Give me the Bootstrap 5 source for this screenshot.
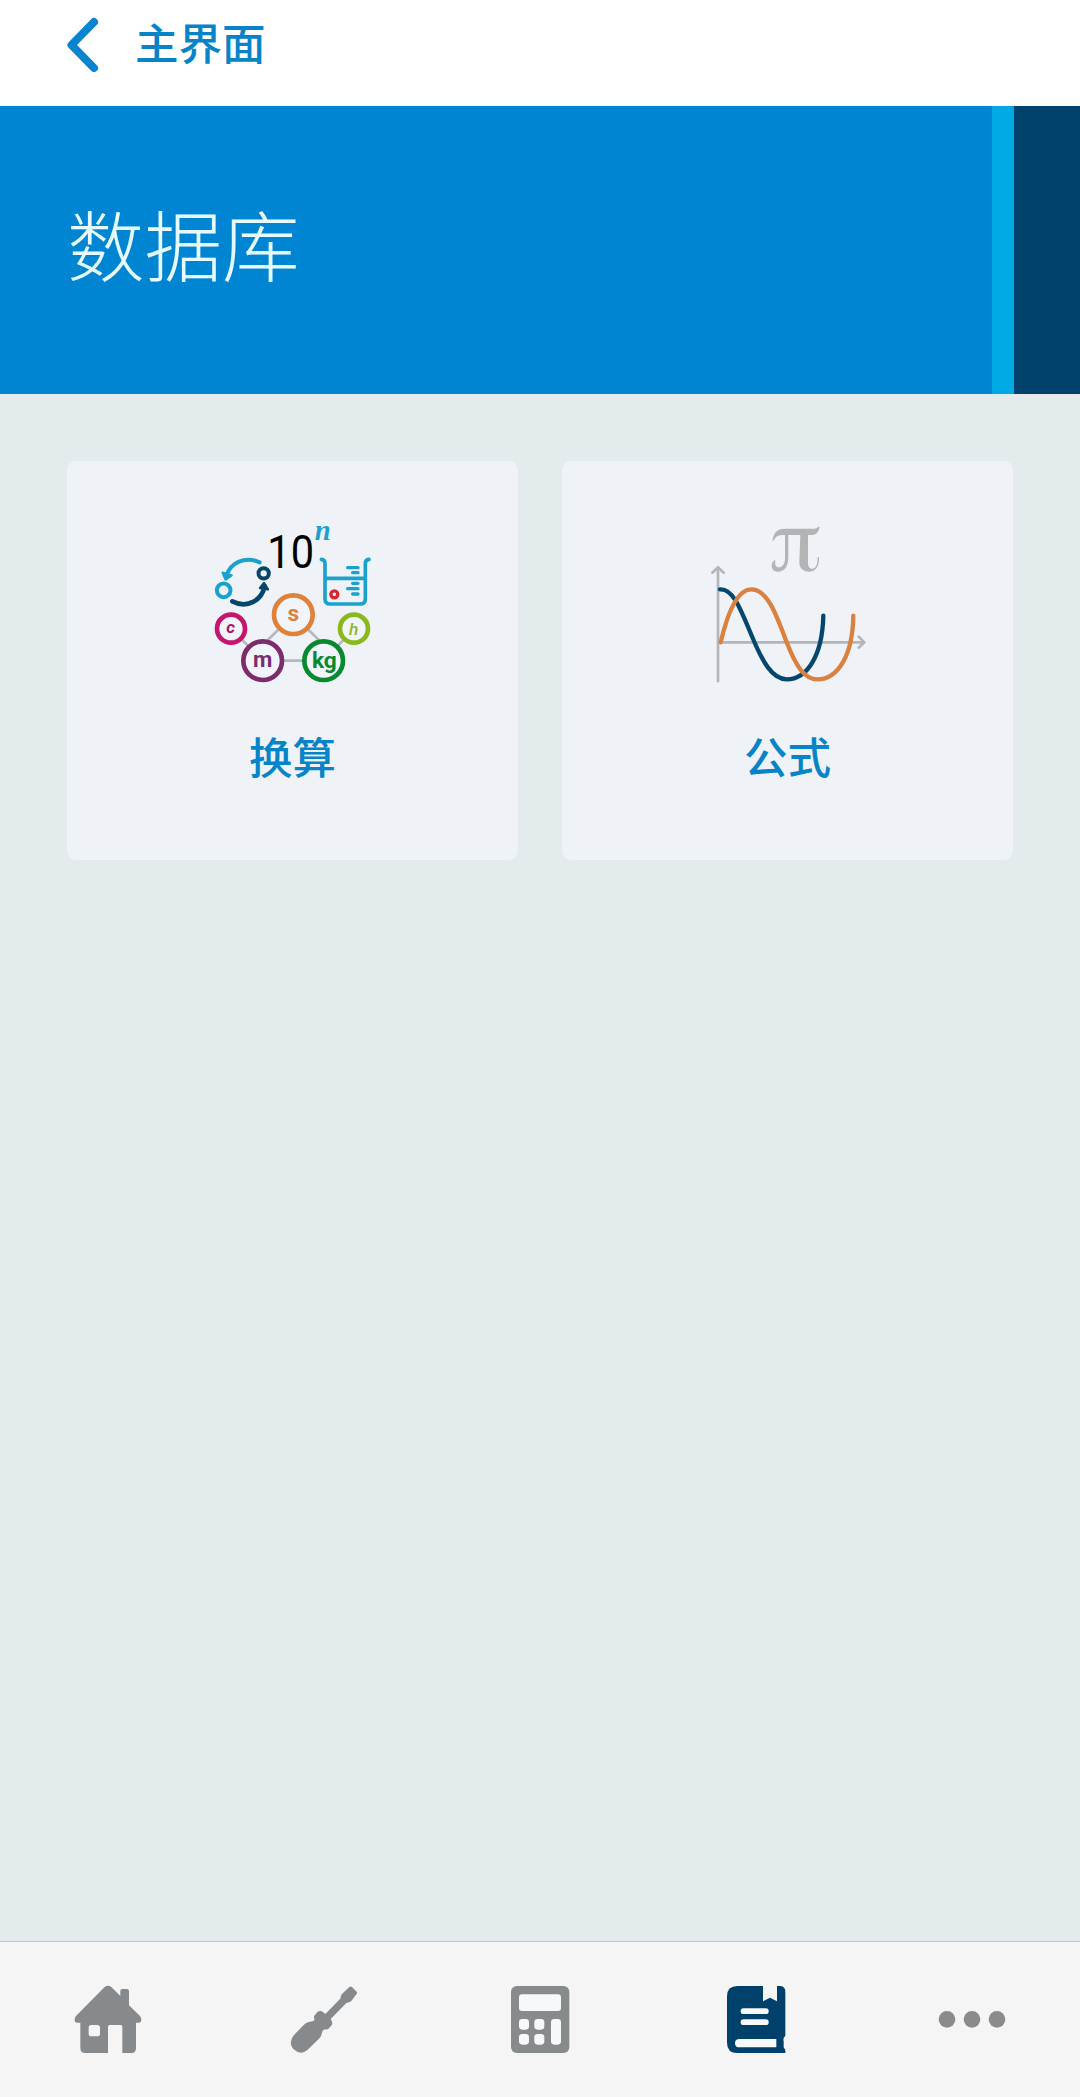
<!DOCTYPE html>
<html lang="zh-CN">
<head>
<meta charset="utf-8">
<meta name="viewport" content="width=device-width, initial-scale=1">
<title>数据库</title>
<link href="https://cdn.jsdelivr.net/npm/bootstrap@5.3.0/dist/css/bootstrap.min.css" rel="stylesheet">
<style>
  body { font-family: Roboto, "Noto Sans CJK SC", sans-serif; background: #e3ebec; }
  .screen { height: 2097px; }
  .topbar { height: 106px; padding: 0 67px 17px; }
  .back-link { color: #0784c8; font-size: 43.5px; font-weight: 500; line-height: 60px; gap: 34px; }
  .back-link span { padding-top: 2px; }
  .hero-band { height: 288px; background: #0085d3; }
  .hero-title { font-size: 77.5px; font-weight: 300; color: #e6fbff; padding-left: 67px; line-height: 1; }
  .stripe-light { width: 22px; background: #00a8e4; }
  .stripe-dark { width: 66.500px; background: #00416b; }
  .tile-list { padding: 66.500px 67px 0; gap: 44px; }
  .tile { height: 399px; background: #eff3f8; border-radius: 9px; padding-top: 49.500px; color: #0784c8; }
  .tile-label { font-size: 43.500px; font-weight: 500; line-height: 60px; margin-top: 29.500px; }
  .bottom-nav { height: 156px; background: #f5f5f5; border-top: 1px solid #b9c8ca; padding-top: 42px; }
  .ic-grey { color: #868a8d; }
  .ic-active { color: #00416b; }
</style>
</head>
<body>
<div class="screen d-flex flex-column overflow-hidden">
  <header class="topbar bg-white d-flex align-items-center">
    <a href="#" class="back-link d-flex align-items-center text-decoration-none">
      <svg width="34" height="56" viewBox="0 0 34 56" fill="none" stroke="#0784d0" stroke-width="8" stroke-linecap="round" stroke-linejoin="round"><path d="M27 5 4.500 28 27 51"/></svg>
      <span>主界面</span>
    </a>
  </header>
  <section class="hero-band d-flex">
    <div class="flex-grow-1 d-flex align-items-center"><h1 class="hero-title mb-0">数据库</h1></div>
    <div class="stripe-light"></div>
    <div class="stripe-dark"></div>
  </section>
  <main class="tile-list d-flex flex-grow-1 align-items-start">
    <a href="#" class="tile flex-fill w-50 d-flex flex-column align-items-center text-decoration-none">
      <svg width="190" height="190" viewBox="-6 0 570 570" fill="none">
        <g stroke="#b5b9bc" stroke-width="8"><path d="M188 405 280 315 372 405M188 452H372M93 356 188 452M462 356 372 452"/></g>
        <g stroke-width="14" fill="#f1f5fb">
          <circle cx="280" cy="314" r="58" stroke="#e0813a"/>
          <circle cx="188" cy="452" r="58" stroke="#7c2b6b"/>
          <circle cx="371" cy="452" r="58" stroke="#07892e"/>
          <circle cx="93" cy="356" r="42" stroke="#c4156f"/>
          <circle cx="462" cy="356" r="42" stroke="#8bb81d"/>
        </g>
        <g text-anchor="middle" font-family="Roboto, sans-serif" font-weight="700">
          <text x="280" y="332" font-size="68" fill="#e0813a">s</text>
          <text x="188" y="470" font-size="67" fill="#7c2b6b">m</text>
          <text x="373" y="473" font-size="68" fill="#07892e">kg</text>
          <text x="92" y="370" font-size="52" font-style="italic" fill="#b01764">c</text>
          <text x="461" y="374" font-size="52" font-style="italic" font-weight="500" fill="#8bb81d">h</text>
          <text x="272" y="174" font-size="136" font-weight="400" fill="#000" textLength="140" lengthAdjust="spacingAndGlyphs">10</text>
          <text x="368" y="91" font-size="86" font-family="Liberation Serif, serif" font-style="italic" fill="#1ba2cc">n</text>
        </g>
        <path d="M179 157C135 137 91 157 79 198" stroke="#1ba2cc" stroke-width="12" stroke-linecap="round"/>
        <path d="M68 188 95 196 77 209Z" fill="#1ba2cc" stroke="#1ba2cc" stroke-width="7" stroke-linejoin="round"/>
        <circle cx="71" cy="241" r="20.500" stroke="#1ba2cc" stroke-width="12"/>
        <path d="M97 274C142 297 186 271 194 228" stroke="#07466c" stroke-width="14" stroke-linecap="round"/>
        <path d="M180 234 192 219 204 238Z" fill="#07466c" stroke="#07466c" stroke-width="7" stroke-linejoin="round"/>
        <circle cx="191" cy="190" r="15.500" stroke="#07466c" stroke-width="12"/>
        <g stroke="#1ba2cc" stroke-width="11" stroke-linecap="round">
          <path d="M364 148Q375 149 375 160V266Q375 282 391 282H480Q496 282 496 266V160Q496 149 507 148M375 205H496"/>
          <path d="M443 173H474M458 188H474M458 220H474M443 236H474M458 252H474" stroke-width="10"/>
        </g>
        <circle cx="403" cy="253" r="10.500" stroke="#d9262d" stroke-width="10"/>
      </svg>
      <span class="tile-label">换算</span>
    </a>
    <a href="#" class="tile flex-fill w-50 d-flex flex-column align-items-center text-decoration-none">
      <svg width="190" height="190" viewBox="9 0 570 570" fill="none" stroke-linecap="round">
        <g fill="#b1b5b5">
          <path d="M247 91C253 64 264 56 286 56H367C378 56 382 54 384 50H389C386 68 378 75 361 75H282C264 75 257 79 251 92Z"/>
          <path d="M285 73H295V140C295 169 283 185 263 185C252 185 245 178 245 168C245 158 250 151 256 151C254 166 258 172 266 172C278 172 285 161 285 144Z"/>
          <path d="M331 73H354V155C354 170 358 176 367 176C378 176 383 163 383 141H387C388 170 377 185 357 185C339 185 328 174 328 157Z"/>
        </g>
        <g stroke="#b3b6b8" stroke-width="8" stroke-linejoin="round"><path stroke-linecap="butt" d="M84 517V174M84 397H520"/><path d="M67 188 84 172 101 188M506 380 523 397 506 413"/></g>
        <path d="M90 238C130 235 152 298 188 384C218 456 247 508 290 508C350 508 397 440 400 317" stroke="#07466c" stroke-width="13"/>
        <path d="M92 397C110 320 139 238 184 238C233 238 260 317 290 397C317 466 342 508 382 508C444 508 488 436 490 317" stroke="#da813f" stroke-width="13"/>
      </svg>
      <span class="tile-label">公式</span>
    </a>
  </main>
  <nav class="bottom-nav d-flex">
    <a href="#" class="ic-grey flex-fill text-center" aria-label="Home"><svg width="72" height="72" viewBox="96 192 216 216" fill="currentColor"><path fill-rule="evenodd" d="M194 201Q204 194 214 201L241 228V213Q241 207 247 207H261Q267 207 267 213V256L300 288Q304 292 304 301Q304 308 297 308H288V384Q288 399 274 399H247V320Q247 315 242 315H209Q204 315 204 320V399H136Q121 399 121 384V308H112Q104 308 104 300Q104 292 108 288ZM154 315Q146 315 146 323V341Q146 349 154 349H172Q180 349 180 341V323Q180 315 172 315Z"/></svg></a>
    <a href="#" class="ic-grey flex-fill text-center" aria-label="Tools"><svg width="72" height="72" viewBox="744 192 216 216" fill="currentColor"><path d="M928 201Q932 198 936 201L950 215Q953 219 949 223L934 243Q929 248 919 249L872 297Q879 308 876 314L867 325Q862 330 854 328L848 332L843 348Q841 352 836 357L803 389Q783 407 764 390Q743 372 760 347L792 314Q797 309 804 307L820 303L824 298Q820 292 823 287L832 276Q840 270 848 275Q854 281 857 281L902 235Q901 226 906 222Z"/></svg></a>
    <a href="#" class="ic-grey flex-fill text-center" aria-label="Calculator"><svg width="72" height="72" viewBox="72 192 216 216"><rect x="93" y="198" width="175" height="201" rx="17" fill="#888b8c"/><g fill="#f6f8f9"><rect x="117" y="223" width="126" height="50" rx="9"/><rect x="117" y="297" width="30" height="32" rx="10"/><rect x="163" y="297" width="30" height="32" rx="10"/><rect x="117" y="342" width="30" height="32" rx="10"/><rect x="163" y="342" width="30" height="32" rx="10"/><rect x="213" y="297" width="30" height="77" rx="10"/></g></svg></a>
    <a href="#" class="ic-active flex-fill text-center" aria-label="Database"><svg width="72" height="72" viewBox="720 192 216 216"><path fill="currentColor" d="M772 198H849V244L870 233 891 244V198H899Q916 198 916 215V347Q908 353 911 364V382L916 390V399H772Q741 399 741 368V229Q741 198 772 198Z"/><g fill="#f6f8f9"><rect x="782" y="265" width="84" height="17" rx="8.500"/><rect x="782" y="298" width="84" height="17" rx="8.500"/><path d="M889 357V382H779Q765 382 765 369.500Q765 357 779 357Z"/></g></svg></a>
    <a href="#" class="ic-grey flex-fill text-center" aria-label="More"><svg width="72" height="72" viewBox="108 162 216 216" fill="#8a8b8b"><circle cx="141" cy="268" r="25"/><circle cx="216" cy="268" r="25"/><circle cx="291" cy="268" r="25"/></svg></a>
  </nav>
</div>
<script src="https://cdn.jsdelivr.net/npm/bootstrap@5.3.0/dist/js/bootstrap.bundle.min.js"></script>
</body>
</html>
